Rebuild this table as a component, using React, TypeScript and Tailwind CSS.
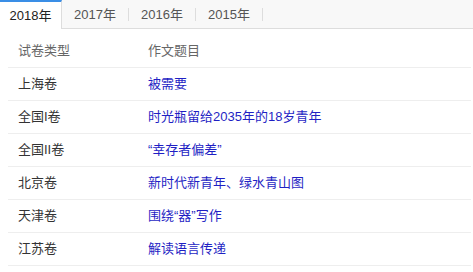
const tabs = ["2018年", "2017年", "2016年", "2015年"];

const rows = [
  { type: "上海卷", title: "被需要" },
  { type: "全国I卷", title: "时光瓶留给2035年的18岁青年" },
  { type: "全国II卷", title: "“幸存者偏差”" },
  { type: "北京卷", title: "新时代新青年、绿水青山图" },
  { type: "天津卷", title: "围绕“器”写作" },
  { type: "江苏卷", title: "解读语言传递" },
];

export default function App() {
  return (
    <div className="h-[272px] w-[473px] overflow-hidden bg-white font-['Liberation_Sans','Noto_Sans_CJK_SC',sans-serif] text-[13px]">
      {/* year tabs */}
      <div className="flex h-[29px] border-b border-[#dddddd] bg-[#f8f8f8]">
        {tabs.map((t, i) =>
          i === 0 ? (
            <div
              key={t}
              className="-mb-px flex h-[29px] w-[62px] items-center justify-center border-r border-t-2 border-r-[#dddddd] border-t-[#3a8ee6] bg-white text-[#222]"
            >
              {t}
            </div>
          ) : (
            <div key={t} className="flex items-center">
              <div className="flex w-[66px] items-center justify-center pt-px text-[#555]">{t}</div>
              <span className="h-[13px] w-px bg-[#dddddd]" />
            </div>
          )
        )}
      </div>

      {/* table */}
      <div className="ml-2 mr-0.5 mt-1.5">
        <div className="flex h-[33px] items-center border-b border-[#eeeeee] text-[#666]">
          <span className="w-[140px] pl-2.5">试卷类型</span>
          <span>作文题目</span>
        </div>
        {rows.map((r) => (
          <div key={r.type} className="flex h-[33px] items-center border-b border-[#eeeeee]">
            <span className="w-[140px] pl-2.5 text-[#333]">{r.type}</span>
            <span className="text-[#1f1fc4]">{r.title}</span>
          </div>
        ))}
      </div>
    </div>
  );
}
